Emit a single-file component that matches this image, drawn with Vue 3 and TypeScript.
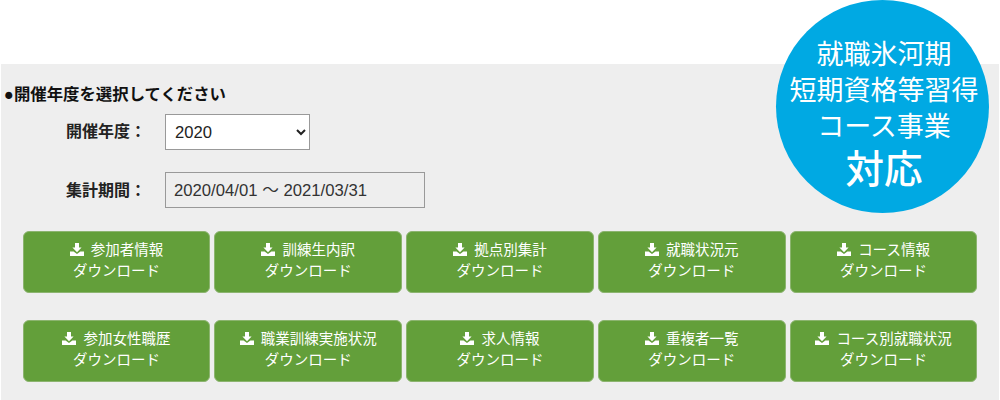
<template>
  <div class="page">
    <div class="badge">
      <span>就職氷河期</span>
      <span>短期資格等習得</span>
      <span>コース事業</span>
      <strong>対応</strong>
    </div>
    <section class="panel">
      <h2 class="heading">●開催年度を選択してください</h2>
      <div class="field year-field">
        <label class="field-label">開催年度：</label>
        <select class="year-select">
          <option>2020</option>
        </select>
      </div>
      <div class="field period-field">
        <label class="field-label period-label">集計期間：</label>
        <div class="period">2020/04/01 ～ 2021/03/31</div>
      </div>
      <div class="buttons">
        <button v-for="name in names" :key="name" class="dl-button" type="button">
          <span class="dl-title">
            <svg class="dl-icon" viewBox="0 0 14 13" aria-hidden="true">
              <path d="M5 0h4v4.500h2.600L7 9.200 2.400 4.500H5z" />
              <path d="M0 8.600h3.600L7 11l3.400-2.400H14V13H0z" />
            </svg>
            {{ name }}
          </span>
          <span>ダウンロード</span>
        </button>
      </div>
    </section>
  </div>
</template>

<script setup lang="ts">
const names: string[] = [
  '参加者情報',
  '訓練生内訳',
  '拠点別集計',
  '就職状況元',
  'コース情報',
  '参加女性職歴',
  '職業訓練実施状況',
  '求人情報',
  '重複者一覧',
  'コース別就職状況',
];
</script>

<style scoped>
.page {
  position: relative;
  width: 1000px;
  height: 400px;
  padding-top: 64px;
  box-sizing: border-box;
  overflow: hidden;
  background: #fff;
  font-family: "Liberation Sans", "Noto Sans CJK JP", sans-serif;
  color: #222;
}
.panel {
  height: 336px;
  margin: 0 1px;
  padding-top: 20px;
  box-sizing: border-box;
  background: #eeeeee;
}
.heading {
  margin: 0 0 0 3px;
  font-size: 16.400px;
  line-height: 20px;
  font-weight: 700;
  color: #111;
}
.field {
  display: flex;
  align-items: center;
  padding-left: 65px;
}
.year-field {
  margin-top: 10px;
}
.period-field {
  margin-top: 22px;
}
.field-label {
  width: 99px;
  font-size: 16px;
  line-height: 20px;
  font-weight: 700;
  color: #222;
}
.period-label {
  padding-top: 2px;
}
.year-select {
  width: 145px;
  height: 36px;
  padding: 0 5px;
  border: 1px solid #999;
  border-radius: 0;
  background: #fff;
  font-family: inherit;
  font-size: 16.600px;
  color: #222;
}
.period {
  width: 260px;
  height: 36px;
  padding-left: 8px;
  box-sizing: border-box;
  border: 1px solid #999;
  font-size: 16.700px;
  line-height: 36px;
  color: #333;
}
.buttons {
  display: grid;
  grid-template-columns: repeat(5, 187.600px);
  column-gap: 4.200px;
  row-gap: 27px;
  margin-top: 23px;
  padding-left: 21.600px;
}
.dl-button {
  display: flex;
  flex-direction: column;
  align-items: center;
  justify-content: center;
  gap: 0;
  height: 62px;
  padding: 0 0 2px;
  border: 1px solid #8cb46f;
  border-radius: 6px;
  background: #639f3a;
  font-family: inherit;
  font-size: 14.500px;
  line-height: 21px;
  color: #fff;
}
.dl-title {
  display: flex;
  align-items: center;
  gap: 7px;
}
.dl-icon {
  width: 14px;
  height: 13px;
  fill: #fff;
  margin-top: -2px;
}
.badge {
  position: absolute;
  left: 776px;
  top: 0;
  display: flex;
  flex-direction: column;
  align-items: center;
  justify-content: center;
  width: 213px;
  height: 213px;
  padding: 18px 0 0 3px;
  box-sizing: border-box;
  border-radius: 50%;
  background: #00a9e3;
  color: #fff;
  font-size: 27px;
  line-height: 36px;
  white-space: nowrap;
}
.badge strong {
  font-size: 38.500px;
  line-height: 50px;
  font-weight: 500;
}
</style>

<style>
html,
body {
  margin: 0;
  background: #fff;
}
</style>
